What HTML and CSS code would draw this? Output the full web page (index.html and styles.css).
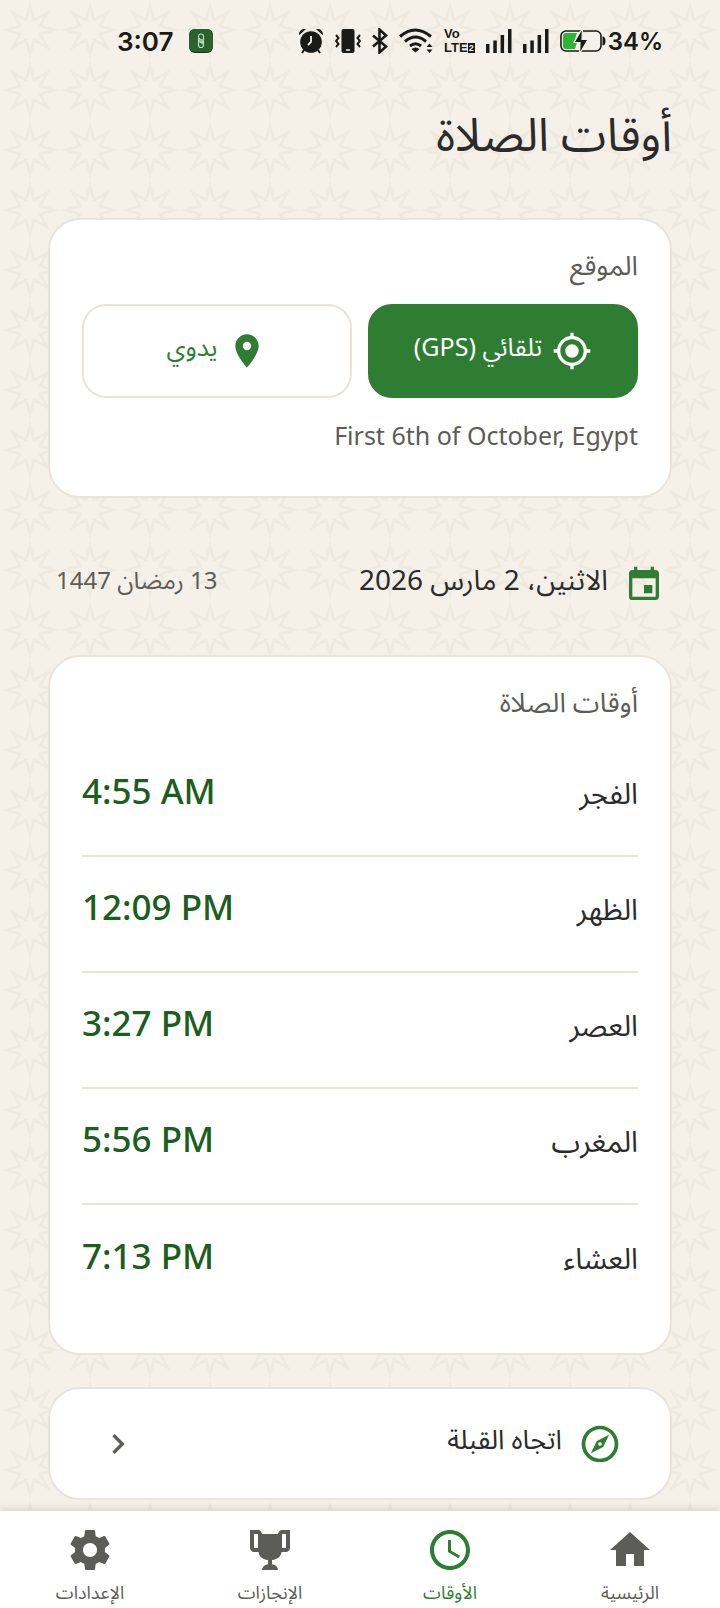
FILE: index.html
```html
<!DOCTYPE html>
<html lang="ar" dir="rtl">
  <head>
    <meta charset="UTF-8" />
    <meta name="viewport" content="width=device-width, initial-scale=1.0" />
    <title>أوقات الصلاة</title>
    <link rel="stylesheet" href="styles.css">
  </head>
  <body>
    <div class="status-bar" dir="ltr">
      <div class="status-left">
        <span class="clock">3:07</span>
        <svg class="app-badge" width="24" height="24" viewBox="0 0 24 24">
          <rect width="24" height="24" rx="6" fill="#222c20" />
          <rect width="24" height="23" rx="6" fill="#2a6230" />
          <rect x="9.500" y="5" width="5" height="8" rx="2.500" fill="none" stroke="#b9d8b4" stroke-width="1.200" />
          <rect x="9.500" y="10.500" width="5" height="8" rx="2.500" fill="none" stroke="#b9d8b4" stroke-width="1.200" />
          <path d="M10 9l4 5M10 12l4 3" fill="none" stroke="#b9d8b4" stroke-width="1.200" />
        </svg>
      </div>
      <div class="status-right">
        <svg width="26" height="26" viewBox="0 0 26 26">
          <circle cx="13" cy="14" r="10.800" />
          <path d="M1 6.500C1 2.500 4 .5 8 1L1.500 7zM25 6.500C25 2.500 22 .5 18 1l6.500 6z" />
          <path d="M6 22l-2 3M20 22l2 3" stroke="#1a1a16" stroke-width="2" />
          <path d="M13 8v6l-3 3" fill="none" stroke="#f5f0e8" stroke-width="1.800" />
        </svg>
        <svg width="26" height="26" viewBox="0 0 26 26">
          <rect x="6.500" y="1" width="13" height="24" rx="2" />
          <path d="M11 22h4" stroke="#f5f0e8" stroke-width="1.500" />
          <path d="M1 7l2.500 3L1 13l2.500 3L1 19M25 7l-2.500 3 2.500 3-2.500 3 2.500 3" fill="none" stroke="#1a1a16" stroke-width="2" />
        </svg>
        <svg width="16" height="26" viewBox="0 0 16 26">
          <path d="M1 7.500l13 11-6.500 6V1.500l6.500 6-13 11" fill="none" stroke="#1a1a16" stroke-width="2.600" />
        </svg>
        <svg width="34" height="26" viewBox="0 0 34 26">
          <path d="M1 8.500q15-13 31 0M6 13.500q10.500-9 21 0M11 18q5.500-4.500 11 0" fill="none" stroke="#1a1a16" stroke-width="3" />
          <path d="M12.500 21q4-3 8 0l-4 3.500zM27.500 19l3-3.500 3 3.500zM27.500 21.500l3 3.500 3-3.500z" />
        </svg>
        <div class="volte">
          <span>Vo</span>
          <span class="lte">LTE<b>2</b></span>
        </div>
        <svg width="26" height="26" viewBox="0 0 26 26">
          <path d="M0 16h3.500v9H0zM7.300 12.500h3.500V25H7.300zM14.600 7h3.500v18h-3.500zM22 1h3.500v24H22z" />
        </svg>
        <svg width="26" height="26" viewBox="0 0 26 26">
          <path d="M0 16h3.500v9H0zM7.300 12.500h3.500V25H7.300zM14.600 7h3.500v18h-3.500zM22 1h3.500v24H22z" />
        </svg>
        <div class="battery">
          <svg width="46" height="26" viewBox="0 0 46 26">
            <rect x="1" y="3" width="40" height="20" rx="5" fill="none" stroke="#1a1a16" stroke-width="1.600" />
            <path d="M42.500 8.500q3 0 3 4.500t-3 4.500z" />
            <path d="M6 5h11l-3 9h3l-2 7H6q-3 0-3-3V8q0-3 3-3z" fill="#2bb33a" />
            <path d="M22.500 0L14 14.500h6L19.500 26 28 11.500h-6z" stroke="#f5f0e8" stroke-width="1.200" />
          </svg>
          <span>34%</span>
        </div>
      </div>
    </div>

    <main class="page">
      <h1>أوقات الصلاة</h1>

      <section class="card">
        <h2>الموقع</h2>
        <div class="modes">
          <button class="mode active" type="button">
            <svg width="40" height="40" viewBox="0 0 24 24">
              <path d="M12 8c-2.210 0-4 1.790-4 4s1.790 4 4 4 4-1.790 4-4-1.790-4-4-4zm8.940 3A8.994 8.994 0 0 0 13 3.060V1h-2v2.060A8.994 8.994 0 0 0 3.060 11H1v2h2.060A8.994 8.994 0 0 0 11 20.940V23h2v-2.060A8.994 8.994 0 0 0 20.940 13H23v-2h-2.060zM12 19c-3.870 0-7-3.130-7-7s3.130-7 7-7 7 3.130 7 7-3.130 7-7 7z" />
            </svg>
            <span>تلقائي (GPS)</span>
          </button>
          <button class="mode" type="button">
            <svg width="40" height="40" viewBox="0 0 24 24">
              <path d="M12 2C8.130 2 5 5.130 5 9c0 5.250 7 13 7 13s7-7.750 7-13c0-3.870-3.130-7-7-7zm0 9.500a2.500 2.500 0 0 1 0-5 2.500 2.500 0 0 1 0 5z" />
            </svg>
            <span>يدوي</span>
          </button>
        </div>
        <p class="place" dir="ltr">First 6th of October, Egypt</p>
      </section>

      <div class="date-row">
        <svg width="40" height="40" viewBox="0 0 24 24">
          <path d="M17 12h-5v5h5v-5zM16 1v2H8V1H6v2H5c-1.110 0-1.990.9-1.990 2L3 19a2 2 0 0 0 2 2h14c1.100 0 2-.9 2-2V5c0-1.100-.9-2-2-2h-1V1h-2zm3 18H5V8h14v11z" />
        </svg>
        <span class="gregorian">الاثنين، 2 مارس 2026</span>
        <span class="hijri">13 رمضان 1447</span>
      </div>

      <section class="card times-card">
        <h2>أوقات الصلاة</h2>
        <ul class="times">
          <li><span class="prayer">الفجر</span><time dir="ltr">4:55 AM</time></li>
          <li><span class="prayer">الظهر</span><time dir="ltr">12:09 PM</time></li>
          <li><span class="prayer">العصر</span><time dir="ltr">3:27 PM</time></li>
          <li><span class="prayer">المغرب</span><time dir="ltr">5:56 PM</time></li>
          <li><span class="prayer">العشاء</span><time dir="ltr">7:13 PM</time></li>
        </ul>
      </section>

      <a class="card qibla" href="#qibla">
        <svg class="compass" width="44" height="44" viewBox="0 0 24 24">
          <path d="M12 2C6.480 2 2 6.480 2 12s4.480 10 10 10 10-4.480 10-10S17.520 2 12 2zm0 18c-4.410 0-8-3.590-8-8s3.590-8 8-8 8 3.590 8 8-3.590 8-8 8z" />
          <path d="M7 17l3.300-6.700L17 7l-3.300 6.700z" />
          <circle cx="12" cy="12" r="1" fill="#fff" />
        </svg>
        <span>اتجاه القبلة</span>
        <svg class="chevron" width="40" height="40" viewBox="0 0 24 24">
          <path d="M8.590 16.590L13.170 12 8.590 7.410 10 6l6 6-6 6z" />
        </svg>
      </a>
    </main>

    <nav class="tabs">
      <a href="#home">
        <svg width="48" height="48" viewBox="0 0 24 24">
          <path d="M10 20v-6h4v6h5v-8h3L12 3 2 12h3v8z" />
        </svg>
        <span>الرئيسية</span>
      </a>
      <a class="current" href="#times">
        <svg width="48" height="48" viewBox="0 0 24 24">
          <path d="M11.990 2C6.470 2 2 6.480 2 12s4.470 10 9.990 10C17.520 22 22 17.520 22 12S17.520 2 11.990 2zM12 20c-4.420 0-8-3.580-8-8s3.580-8 8-8 8 3.580 8 8-3.580 8-8 8zm.5-13H11v6l5.250 3.150.750-1.230-4.500-2.670z" />
        </svg>
        <span>الأوقات</span>
      </a>
      <a href="#achievements">
        <svg width="48" height="48" viewBox="0 0 24 24">
          <path fill-rule="evenodd" d="M18 2c-.9 0-2 1-2 2H8c0-1-1.100-2-2-2H2v9c0 1 1 2 2 2h2.200c.4 2 1.700 3.700 4.800 4v2.080C8 19.540 8 22 8 22h8s0-2.460-3-2.920V17c3.100-.3 4.400-2 4.800-4H20c1 0 2-1 2-2V2h-4zM6 11H4V4h2v7zm14 0h-2V4h2v7z" />
        </svg>
        <span>الإنجازات</span>
      </a>
      <a href="#settings">
        <svg width="48" height="48" viewBox="0 0 24 24">
          <path d="M19.430 12.980c.04-.32.070-.64.070-.98s-.03-.66-.07-.98l2.110-1.650c.19-.15.240-.42.120-.64l-2-3.460c-.12-.22-.39-.3-.61-.22l-2.490 1c-.52-.4-1.080-.73-1.690-.98l-.38-2.650A.488.488 0 0 0 14 2h-4c-.25 0-.46.180-.49.420l-.38 2.650c-.61.250-1.170.590-1.690.980l-2.490-1c-.23-.09-.49 0-.61.220l-2 3.460c-.13.220-.07.490.12.640l2.110 1.650c-.04.320-.07.650-.07.980s.03.660.070.980l-2.110 1.650c-.19.150-.24.420-.12.640l2 3.460c.12.220.390.300.610.220l2.490-1c.52.400 1.080.730 1.690.980l.38 2.650c.03.240.24.420.49.420h4c.25 0 .46-.18.490-.42l.38-2.650c.61-.25 1.170-.59 1.690-.98l2.490 1c.23.090.49 0 .61-.22l2-3.460c.12-.22.070-.49-.12-.64l-2.110-1.650zM12 15.500c-1.930 0-3.500-1.570-3.500-3.500s1.570-3.500 3.500-3.500 3.500 1.570 3.500 3.500-1.570 3.500-3.500 3.500z" />
        </svg>
        <span>الإعدادات</span>
      </a>
    </nav>
  </body>
</html>
```
FILE: styles.css
```css
* {
  box-sizing: border-box;
}
body {
  margin: 0;
  min-height: 100vh;
  display: flex;
  flex-direction: column;
  font-family: "Noto Sans", "Noto Sans Arabic", "DejaVu Sans", sans-serif;
  color: #2b2b2b;
  background-color: #f5f0e8;
  background-image: url("data:image/svg+xml,%3Csvg xmlns='http://www.w3.org/2000/svg' width='60' height='60'%3E%3Cpath d='M30 6L34 20 47 13 40 26 54 30 40 34 47 47 34 40 30 54 26 40 13 47 20 34 6 30 20 26 13 13 26 20z' fill='none' stroke='%23eeeadf' stroke-width='2.800'/%3E%3C/svg%3E");
}
h1,
h2,
p,
ul {
  margin: 0;
  padding: 0;
}
svg {
  display: block;
  flex: none;
  fill: currentColor;
}

.status-bar {
  display: flex;
  justify-content: space-between;
  align-items: center;
  height: 82px;
  padding: 0 57px 0 117px;
  color: #1a1a16;
  font-family: Inter, sans-serif;
  font-weight: 600;
}
.status-left,
.status-right,
.battery {
  display: flex;
  align-items: center;
}
.status-left {
  gap: 16px;
}
.status-right {
  gap: 11px;
}
.clock {
  font-size: 26px;
}
.battery {
  gap: 2px;
  font-size: 24px;
}
.volte {
  display: flex;
  flex-direction: column;
  font-family: "Liberation Sans", sans-serif;
  font-size: 13px;
  line-height: 14px;
  font-weight: 700;
}
.lte {
  display: flex;
  align-items: center;
}
.volte b {
  padding: 0 1px;
  font-size: 9px;
  line-height: 10px;
  color: #f5f0e8;
  background-color: #1a1a16;
}

.page {
  flex: 1;
  padding: 0 48px 10px;
}
h1 {
  height: 136px;
  padding-top: 18px;
  font-size: 46px;
  line-height: 66px;
  font-weight: 400;
}
.card {
  background-color: #fff;
  border: 2px solid #e8e4dc;
  border-radius: 32px;
  padding: 30px 32px;
}
h2 {
  font-size: 27px;
  line-height: 30px;
  font-weight: 400;
  color: #5c5c58;
}
.modes {
  display: grid;
  grid-template-columns: 1fr 1fr;
  gap: 16px;
  margin: 24px 0 20px;
}
.mode {
  display: flex;
  justify-content: center;
  align-items: center;
  gap: 10px;
  height: 94px;
  padding: 0;
  border: 2px solid #e8e4dc;
  border-radius: 24px;
  background-color: #fff;
  color: #2e7d32;
  font-family: inherit;
  font-size: 25px;
}
.mode span {
  padding-bottom: 6px;
}
.mode.active {
  background-color: #2e7d32;
  border-color: #2e7d32;
  color: #fff;
}
.place {
  padding-bottom: 14px;
  font-size: 25px;
  line-height: 34px;
  text-align: right;
  color: #5c5c58;
}

.date-row {
  display: flex;
  align-items: center;
  gap: 16px;
  height: 157px;
  padding: 16px 8px 0;
  font-size: 28px;
}
.date-row svg {
  color: #2e7d32;
}
.date-row span {
  padding-bottom: 6px;
}
.hijri {
  margin-right: auto;
  font-size: 24px;
  color: #5c5c58;
}

.times-card {
  padding-bottom: 32px;
}
.times {
  margin-top: 24px;
  list-style: none;
}
.times li {
  display: flex;
  justify-content: space-between;
  align-items: center;
  height: 116px;
  padding-bottom: 12px;
  border-bottom: 2px solid #e8e4dc;
}
.times li:last-child {
  border-bottom: 0;
}
.prayer {
  padding-top: 4px;
  font-size: 29px;
}
.times time {
  padding-bottom: 4px;
  font-size: 35px;
  font-weight: 500;
  color: #1b5e20;
}
.qibla {
  display: flex;
  align-items: center;
  gap: 16px;
  height: 113px;
  margin-top: 32px;
  padding: 0 48px;
  font-size: 27px;
  color: inherit;
  text-decoration: none;
}
.qibla span {
  padding-bottom: 6px;
}
.compass {
  color: #2e7d32;
}
.chevron {
  margin-right: auto;
  color: #5c5c58;
}

.tabs {
  display: grid;
  grid-template-columns: repeat(4, 1fr);
  height: 97px;
  padding-top: 15px;
  background-color: #fff;
  box-shadow: 0 -2px 8px rgba(0, 0, 0, 0.12);
}
.tabs a {
  display: flex;
  flex-direction: column;
  align-items: center;
  gap: 6px;
  font-size: 18px;
  line-height: 24px;
  color: #5c5c58;
  text-decoration: none;
}
.tabs .current {
  color: #2e7d32;
}
```
